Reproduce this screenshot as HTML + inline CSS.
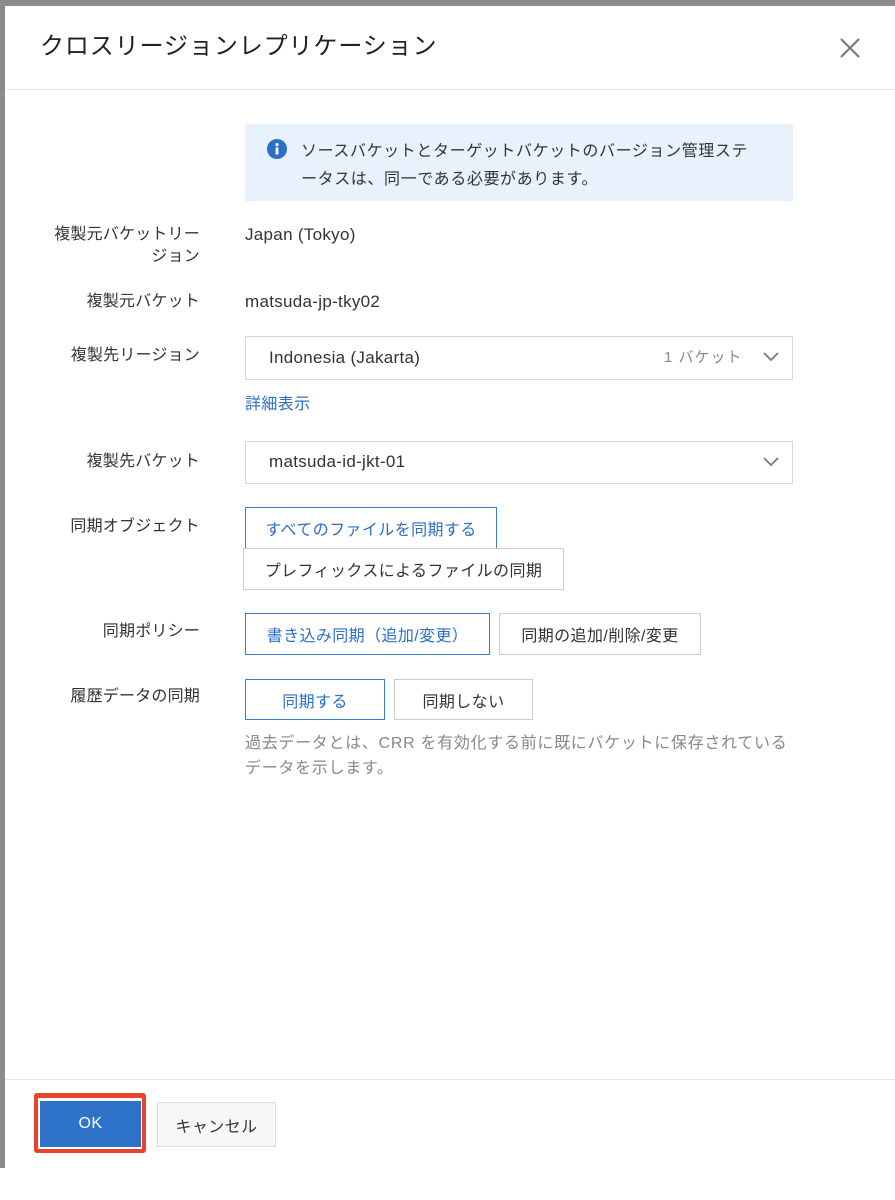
<!DOCTYPE html>
<html><head><meta charset="utf-8"><style>
*{margin:0;padding:0;box-sizing:border-box}
body{width:895px;height:1200px;background:#fff;position:relative;overflow:hidden;font-family:"Liberation Sans","Noto Sans CJK JP",sans-serif;color:#333;font-size:16px;letter-spacing:0.4px}
.a{position:absolute;white-space:nowrap}
.lab{position:absolute;right:695px;text-align:right;font-size:16px;color:#333;line-height:22px;letter-spacing:0.2px}
.box{position:absolute;border:1px solid #d9d9d9;background:#fff}
.btn{position:absolute;border:1px solid #ccc;background:#fff;font-size:16px;display:flex;align-items:center;justify-content:center;color:#333}
.pri{border:1px solid #3a7bd5;color:#2a6fc9}
.l{font-size:17px;letter-spacing:0.3px}
</style></head><body>
<div class="a" style="left:0;top:0;width:895px;height:6px;background:#8c8c8c"></div>
<div class="a" style="left:0;top:0;width:5px;height:1168px;background:#8c8c8c"></div>
<div class="a" style="left:40px;top:30px;font-size:24px;color:#222;line-height:34px;letter-spacing:0.9px">クロスリージョンレプリケーション</div>
<svg class="a" style="left:838px;top:36px" width="24" height="24" viewBox="0 0 24 24"><path d="M3 3L21 21M21 3L3 21" stroke="#777" stroke-width="2" fill="none"/></svg>
<div class="a" style="left:5px;top:89px;width:890px;height:1px;background:#e6e6e6"></div>

<div class="a" style="left:245px;top:124px;width:548px;height:77px;background:#e8f2fd"></div>
<svg class="a" style="left:267px;top:139px" width="20" height="20" viewBox="0 0 20 20"><circle cx="10" cy="10" r="10" fill="#2a6fc9"/><rect x="8.6" y="8.5" width="2.8" height="7" fill="#fff"/><circle cx="10" cy="5.6" r="1.6" fill="#fff"/></svg>
<div class="a" style="left:301px;top:138px;line-height:28px;color:#333;letter-spacing:0.6px">ソースバケットとターゲットバケットのバージョン管理ステ<br>ータスは、同一である必要があります。</div>

<div class="lab" style="top:224px">複製元バケットリー<br>ジョン</div>
<div class="a l" style="left:245px;top:224px;line-height:22px">Japan (Tokyo)</div>
<div class="lab" style="top:291px">複製元バケット</div>
<div class="a l" style="left:245px;top:291px;line-height:22px">matsuda-jp-tky02</div>

<div class="lab" style="top:345px">複製先リージョン</div>
<div class="box" style="left:245px;top:336px;width:548px;height:44px"></div>
<div class="a l" style="left:269px;top:347px;line-height:22px">Indonesia (Jakarta)</div>
<div class="a" style="left:664px;top:347px;line-height:22px;color:#888;font-size:15px;letter-spacing:1px">1 バケット</div>
<svg class="a" style="left:762px;top:350px" width="18" height="14" viewBox="0 0 18 14"><path d="M2 3L9 10L16 3" stroke="#777" stroke-width="1.8" fill="none"/></svg>
<div class="a" style="left:245px;top:394px;line-height:22px;color:#2a6fc9">詳細表示</div>

<div class="lab" style="top:451px">複製先バケット</div>
<div class="box" style="left:245px;top:441px;width:548px;height:43px"></div>
<div class="a l" style="left:269px;top:451px;line-height:22px">matsuda-id-jkt-01</div>
<svg class="a" style="left:762px;top:455px" width="18" height="14" viewBox="0 0 18 14"><path d="M2 3L9 10L16 3" stroke="#777" stroke-width="1.8" fill="none"/></svg>

<div class="lab" style="top:516px">同期オブジェクト</div>
<div class="btn pri" style="left:245px;top:507px;width:252px;height:42px">すべてのファイルを同期する</div>
<div class="btn" style="left:243px;top:548px;width:321px;height:42px">プレフィックスによるファイルの同期</div>

<div class="lab" style="top:621px">同期ポリシー</div>
<div class="btn pri" style="left:245px;top:613px;width:245px;height:42px">書き込み同期（追加/変更）</div>
<div class="btn" style="left:499px;top:613px;width:202px;height:42px">同期の追加/削除/変更</div>

<div class="lab" style="top:686px">履歴データの同期</div>
<div class="btn pri" style="left:245px;top:679px;width:140px;height:41px">同期する</div>
<div class="btn" style="left:394px;top:679px;width:139px;height:41px">同期しない</div>
<div class="a" style="left:245px;top:731px;line-height:25px;color:#888;letter-spacing:0.7px">過去データとは、CRR を有効化する前に既にバケットに保存されている<br>データを示します。</div>

<div class="a" style="left:5px;top:1079px;width:890px;height:1px;background:#e6e6e6"></div>
<div class="a" style="left:34px;top:1093px;width:112px;height:60px;background:#e8432b;border-radius:3px"></div>
<div class="a" style="left:38px;top:1098px;width:104px;height:51px;background:#fff"></div>
<div class="a" style="left:40px;top:1101px;width:101px;height:46px;background:#2f72c9;color:#fff;display:flex;align-items:center;justify-content:center;font-size:16px">OK</div>
<div class="btn" style="left:157px;top:1102px;width:119px;height:45px;background:#f7f7f7;border-color:#ddd">キャンセル</div>
</body></html>
